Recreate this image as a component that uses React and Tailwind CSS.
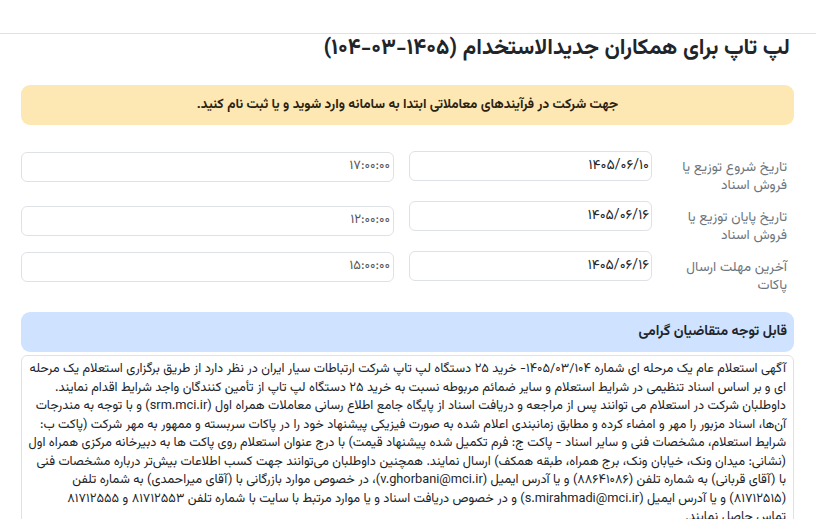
import React from "react";

const font = { fontFamily: '"Vazirmatn", "Noto Sans Arabic", "DejaVu Sans", sans-serif' };

const bodyLines = [
  "آگهی استعلام عام یک مرحله ای شماره ۱۴۰۵/۰۳/۱۰۴- خرید ۲۵ دستگاه لپ تاپ شرکت ارتباطات سیار ایران در نظر دارد از طریق برگزاری استعلام یک مرحله",
  "ای و بر اساس اسناد تنظیمی در شرایط استعلام و سایر ضمائم مربوطه نسبت به خرید ۲۵ دستگاه لپ تاپ از تأمین کنندگان واجد شرایط اقدام نمایند.",
  "داوطلبان شرکت در استعلام می توانند پس از مراجعه و دریافت اسناد از پایگاه جامع اطلاع رسانی معاملات همراه اول (srm.mci.ir) و با توجه به مندرجات",
  "آن‌ها، اسناد مزبور را مهر و امضاء کرده و مطابق زمانبندی اعلام شده به صورت فیزیکی پیشنهاد خود را در پاکات سربسته و ممهور به مهر شرکت (پاکت ب:",
  "شرایط استعلام، مشخصات فنی و سایر اسناد - پاکت ج: فرم تکمیل شده پیشنهاد قیمت) با درج عنوان استعلام روی پاکت ها به دبیرخانه مرکزی همراه اول",
  "(نشانی: میدان ونک، خیابان ونک، برج همراه، طبقه همکف) ارسال نمایند. همچنین داوطلبان می‌توانند جهت کسب اطلاعات بیش‌تر درباره مشخصات فنی",
  "با (آقای قربانی) به شماره تلفن (۸۸۶۴۱۰۸۶) و یا آدرس ایمیل (v.ghorbani@mci.ir)، در خصوص موارد بازرگانی با (آقای میراحمدی) به شماره تلفن",
  "(۸۱۷۱۲۵۱۵) و یا آدرس ایمیل (s.mirahmadi@mci.ir) و در خصوص دریافت اسناد و یا موارد مرتبط با سایت با شماره تلفن ۸۱۷۱۲۵۵۳ و ۸۱۷۱۲۵۵۵",
  "تماس حاصل نمایند.",
];

const rows = [
  { label: ["تاریخ شروع توزیع یا", "فروش اسناد"], date: "۱۴۰۵/۰۶/۱۰", time: "۱۷:۰۰:۰۰", timeMt: "mt-[1px]" },
  { label: ["تاریخ پایان توزیع یا", "فروش اسناد"], date: "۱۴۰۵/۰۶/۱۶", time: "۱۲:۰۰:۰۰", timeMt: "mt-[5px]" },
  { label: ["آخرین مهلت ارسال", "پاکات"], date: "۱۴۰۵/۰۶/۱۶", time: "۱۵:۰۰:۰۰", timeMt: "mt-[1px]" },
];

export default function App() {
  return (
    <div dir="rtl" style={font} className="w-[816px] h-[519px] overflow-hidden bg-white text-[#212529]">
      <div className="h-[34px] border-b border-[#dee2e6]" />
      <div className="pr-[22px] pl-[21px]">
        <h1 className="pt-[1px] h-[51px] text-[22px] leading-[28px] font-bold text-[#212529] pr-[4px]">
          لپ تاپ برای همکاران جدیدالاستخدام (۱۴۰۵-۰۳-۱۰۴)
        </h1>
        <div className="h-[40px] rounded-[9px] bg-[#fde8b4] flex items-center justify-center text-[13.5px] font-bold text-[#2b2210]">
          جهت شرکت در فرآیندهای معاملاتی ابتدا به سامانه وارد شوید و یا ثبت نام کنید.
        </div>

        <div className="mt-[26px] flex flex-col">
          {rows.map((r, i) => (
            <div key={i} className="flex h-[50px]">
              <div className="w-[142px] shrink-0 pr-[7px] pt-[8px] text-[13.7px] leading-[18px] text-[#6c757d]">
                {r.label[0]}
                <br />
                {r.label[1]}
              </div>
              <div className="w-[243px] shrink-0 h-[30px] rounded-[6px] border border-[#dee2e6] flex items-center pr-[2px] text-[14px] text-[#212529]">
                {r.date}
              </div>
              <div className="w-[15px] shrink-0" />
              <div className={"flex-1 h-[30px] rounded-[6px] border border-[#dee2e6] flex items-center pr-[3px] text-[13px] text-[#555] " + r.timeMt}>
                {r.time}
              </div>
            </div>
          ))}
        </div>

        <div className="mt-[11px] h-[40px] rounded-[9px] bg-[#cfe2ff] flex items-center pr-[7px] text-[14px] font-bold text-[#212529]">
          قابل توجه متقاضیان گرامی
        </div>
        <div className="mt-[3px] rounded-[6px] border border-[#dee2e6] pr-[7px] pl-[8px] pt-[4px] text-[12.8px] leading-[18.5px] text-[#212529]">
          {bodyLines.map((l, i) => (
            <p key={i} className="whitespace-nowrap">{l}</p>
          ))}
        </div>
      </div>
    </div>
  );
}
